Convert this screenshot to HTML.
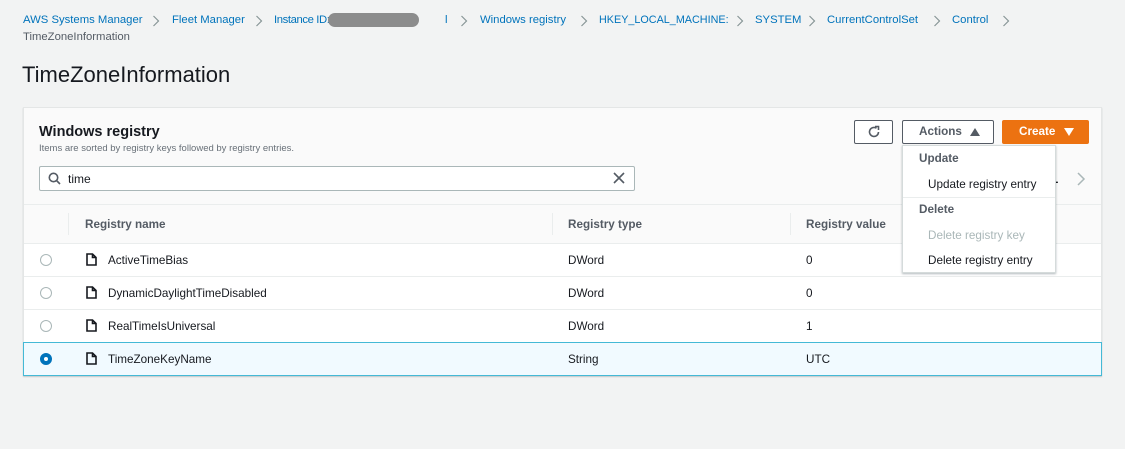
<!DOCTYPE html>
<html><head><style>
*{margin:0;padding:0;box-sizing:border-box}
body{width:1125px;height:449px;background:#f2f3f3;font-family:"Liberation Sans",Arial,sans-serif;color:#16191f;position:relative;overflow:hidden;font-size:11.7px}
.a{position:absolute;white-space:nowrap}
.bc{color:#0073bb;font-size:11.3px;top:14px}
.sep{top:15px}
.panel{position:absolute;left:23px;top:107px;width:1079px;height:269px;background:#fafafa;border:1px solid #e4e6e6;box-shadow:0 1px 1px rgba(0,28,36,.2)}
.row{position:absolute;left:0;width:1077px;height:33px;background:#fff;border-top:1px solid #eaeded}
.row .a{top:10px}
.rad{position:absolute;left:16px;top:10px;width:12px;height:12px;border:1px solid #aab7b8;border-radius:50%;background:#fff}
.doc{position:absolute;left:62px;top:9px}
.th{font-weight:bold;color:#545b64;top:110px}
.btn{position:absolute;height:24px;border:1px solid #545b64;border-radius:2px;background:#fff;font-weight:bold;color:#545b64;text-align:center;line-height:22px}
</style></head><body>
<div class="a bc" style="left:23px">AWS Systems Manager</div>
<svg class="a sep" style="left:152px" width="8" height="12"><path d="M1.5 1L6.5 6L1.5 11" fill="none" stroke="#879596" stroke-width="1.2"/></svg>
<div class="a bc" style="left:172px">Fleet Manager</div>
<svg class="a sep" style="left:255px" width="8" height="12"><path d="M1.5 1L6.5 6L1.5 11" fill="none" stroke="#879596" stroke-width="1.2"/></svg>
<div class="a bc" style="left:274px;letter-spacing:-0.4px">Instance ID: i-0</div>
<div class="a" style="left:328px;top:13px;width:91px;height:14px;background:#8c8c8c;border-radius:7px"></div>
<div class="a bc" style="left:445px">l</div>
<svg class="a sep" style="left:460px" width="8" height="12"><path d="M1.5 1L6.5 6L1.5 11" fill="none" stroke="#879596" stroke-width="1.2"/></svg>
<div class="a bc" style="left:480px">Windows registry</div>
<svg class="a sep" style="left:580px" width="8" height="12"><path d="M1.5 1L6.5 6L1.5 11" fill="none" stroke="#879596" stroke-width="1.2"/></svg>
<div class="a bc" style="left:599px;font-size:10.8px">HKEY_LOCAL_MACHINE:</div>
<svg class="a sep" style="left:736px" width="8" height="12"><path d="M1.5 1L6.5 6L1.5 11" fill="none" stroke="#879596" stroke-width="1.2"/></svg>
<div class="a bc" style="left:755px">SYSTEM</div>
<svg class="a sep" style="left:808px" width="8" height="12"><path d="M1.5 1L6.5 6L1.5 11" fill="none" stroke="#879596" stroke-width="1.2"/></svg>
<div class="a bc" style="left:827px">CurrentControlSet</div>
<svg class="a sep" style="left:933px" width="8" height="12"><path d="M1.5 1L6.5 6L1.5 11" fill="none" stroke="#879596" stroke-width="1.2"/></svg>
<div class="a bc" style="left:952px">Control</div>
<svg class="a sep" style="left:1002px" width="8" height="12"><path d="M1.5 1L6.5 6L1.5 11" fill="none" stroke="#879596" stroke-width="1.2"/></svg>
<div class="a" style="left:23px;top:31px;color:#545b64;font-size:11.3px">TimeZoneInformation</div>
<div class="a" style="left:22px;top:62px;font-size:22px">TimeZoneInformation</div>

<div class="panel">
 <div class="a" style="left:15px;top:16px;font-size:14.5px;font-weight:bold">Windows registry</div>
 <div class="a" style="left:15px;top:35px;font-size:9.5px;color:#687078">Items are sorted by registry keys followed by registry entries.</div>
 <div class="a" style="left:15px;top:58px;width:596px;height:25px;background:#fff;border:1px solid #aab7b8;border-radius:2px">
  <svg class="a" style="left:8px;top:5px" width="13" height="13" viewBox="0 0 13 13"><circle cx="5.5" cy="5.5" r="4.2" fill="none" stroke="#545b64" stroke-width="1.6"/><path d="M8.5 8.5L12 12" stroke="#545b64" stroke-width="1.6"/></svg>
  <div class="a" style="left:28px;top:5px;font-size:12px">time</div>
  <svg class="a" style="left:573px;top:5px" width="12" height="12"><path d="M1 1L11 11M11 1L1 11" stroke="#545b64" stroke-width="1.6"/></svg>
 </div>
 <div class="a" style="left:0;top:96px;width:1077px;border-top:1px solid #eaeded"></div>
 <div class="a" style="left:44px;top:105px;height:22px;border-left:1px solid #eaeded"></div>
 <div class="a" style="left:528px;top:105px;height:22px;border-left:1px solid #eaeded"></div>
 <div class="a" style="left:766px;top:105px;height:22px;border-left:1px solid #eaeded"></div>
 <div class="a th" style="left:61px">Registry name</div>
 <div class="a th" style="left:544px">Registry type</div>
 <div class="a th" style="left:782px">Registry value</div>
 <div class="a" style="left:1027px;top:63px;font-size:13px;font-weight:bold">1</div>
 <svg class="a" style="left:1052px;top:64px" width="10" height="14"><path d="M2 1L8 7L2 13" fill="none" stroke="#aab7b8" stroke-width="1.5"/></svg>

 <div class="row" style="top:135px"><div class="rad"></div><svg class="doc" width="11" height="13"><path d="M1 1H6.5L10 4.5V12H1Z M6.5 1V4.5H10" fill="none" stroke="#16191f" stroke-width="1.6"/></svg><div class="a" style="left:84px">ActiveTimeBias</div><div class="a" style="left:544px">DWord</div><div class="a" style="left:782px">0</div></div>
 <div class="row" style="top:168px"><div class="rad"></div><svg class="doc" width="11" height="13"><path d="M1 1H6.5L10 4.5V12H1Z M6.5 1V4.5H10" fill="none" stroke="#16191f" stroke-width="1.6"/></svg><div class="a" style="left:84px">DynamicDaylightTimeDisabled</div><div class="a" style="left:544px">DWord</div><div class="a" style="left:782px">0</div></div>
 <div class="row" style="top:201px"><div class="rad"></div><svg class="doc" width="11" height="13"><path d="M1 1H6.5L10 4.5V12H1Z M6.5 1V4.5H10" fill="none" stroke="#16191f" stroke-width="1.6"/></svg><div class="a" style="left:84px">RealTimeIsUniversal</div><div class="a" style="left:544px">DWord</div><div class="a" style="left:782px">1</div></div>
 <div class="row" style="top:234px;background:#f1faff;border:1px solid #44b9d6;left:-1px;width:1079px;height:34px"><div class="rad" style="border:4px solid #0073bb;left:16px"></div><svg class="doc" style="left:62px" width="11" height="13"><path d="M1 1H6.5L10 4.5V12H1Z M6.5 1V4.5H10" fill="none" stroke="#16191f" stroke-width="1.6"/></svg><div class="a" style="left:84px">TimeZoneKeyName</div><div class="a" style="left:544px">String</div><div class="a" style="left:782px">UTC</div></div>
</div>

<div class="btn" style="left:854px;top:120px;width:39px"><svg style="margin-top:4px" width="14" height="14" viewBox="0 0 14 14"><path d="M11.5 7A4.5 4.5 0 1 1 9.5 3.2" fill="none" stroke="#545b64" stroke-width="1.6"/><path d="M8 1.5H11.5V5" fill="none" stroke="#545b64" stroke-width="1.6"/></svg></div>
<div class="btn" style="left:902px;top:120px;width:92px;text-align:left;padding-left:16px">Actions<svg style="position:absolute;left:67px;top:7px" width="10" height="8"><path d="M0 8L5 0L10 8Z" fill="#545b64"/></svg></div>
<div class="a" style="left:1002px;top:120px;width:87px;height:24px;background:#ec7211;border-radius:2px;color:#fff;font-weight:bold;line-height:24px;padding-left:17px">Create<svg style="position:absolute;left:62px;top:8px" width="10" height="8"><path d="M0 0L5 8L10 0Z" fill="#fff"/></svg></div>

<div class="a" style="left:902px;top:145px;width:154px;height:128px;background:#fff;border:1px solid #d5dbdb;box-shadow:0 1px 2px rgba(0,28,36,.3)">
 <div class="a" style="left:16px;top:6px;font-weight:bold;color:#545b64">Update</div>
 <div class="a" style="left:25px;top:32px">Update registry entry</div>
 <div class="a" style="left:0;top:51px;width:152px;border-top:1px solid #eaeded"></div>
 <div class="a" style="left:16px;top:57px;font-weight:bold;color:#545b64">Delete</div>
 <div class="a" style="left:25px;top:83px;color:#aab7b8">Delete registry key</div>
 <div class="a" style="left:25px;top:108px">Delete registry entry</div>
</div>
</body></html>
